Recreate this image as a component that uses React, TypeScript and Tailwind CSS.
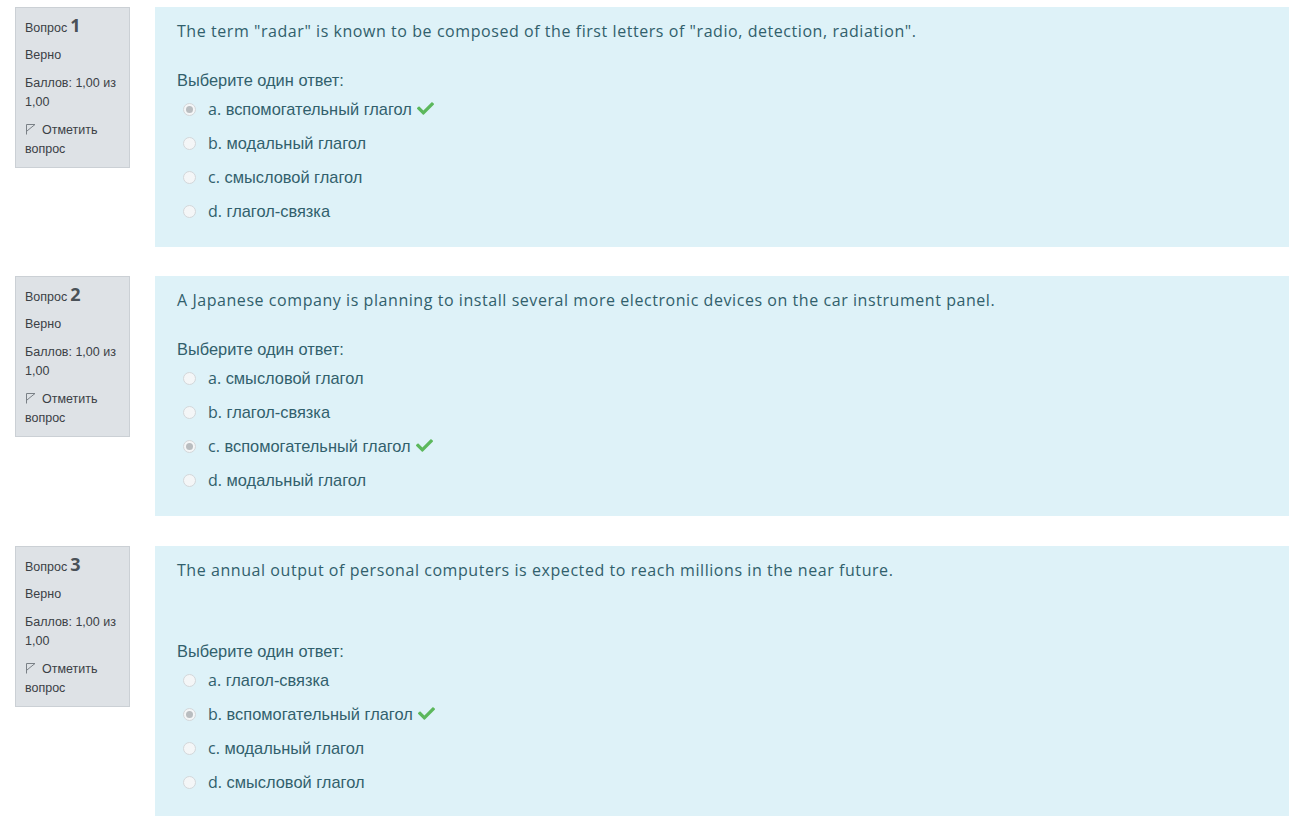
import React from "react";

type Opt = { letter: string; text: string; correct?: boolean };
type Q = { num: number; prompt: string; extraGap?: boolean; options: Opt[] };

const QUESTIONS: Q[] = [
  {
    num: 1,
    prompt: 'The term "radar" is known to be composed of the first letters of "radio, detection, radiation".',
    options: [
      { letter: "a", text: "вспомогательный глагол", correct: true },
      { letter: "b", text: "модальный глагол" },
      { letter: "c", text: "смысловой глагол" },
      { letter: "d", text: "глагол-связка" },
    ],
  },
  {
    num: 2,
    prompt: "A Japanese company is planning to install several more electronic devices on the car instrument panel.",
    options: [
      { letter: "a", text: "смысловой глагол" },
      { letter: "b", text: "глагол-связка" },
      { letter: "c", text: "вспомогательный глагол", correct: true },
      { letter: "d", text: "модальный глагол" },
    ],
  },
  {
    num: 3,
    prompt: "The annual output of personal computers is expected to reach millions in the near future.",
    extraGap: true,
    options: [
      { letter: "a", text: "глагол-связка" },
      { letter: "b", text: "вспомогательный глагол", correct: true },
      { letter: "c", text: "модальный глагол" },
      { letter: "d", text: "смысловой глагол" },
    ],
  },
];

function FlagIcon() {
  return (
    <svg width="11" height="12" viewBox="0 0 11 12" fill="none" stroke="#7a8086" strokeWidth="1" strokeLinejoin="round">
      <path d="M1.5 11.5V1.5H10L5 5.5L2 8" />
    </svg>
  );
}

function CheckIcon() {
  return (
    <svg width="17" height="17" viewBox="0 0 512 512" className="inline-block ml-[5px] -mt-[3px] align-middle">
      <path
        fill="#5cb85c"
        d="M173.898 439.404l-166.4-166.4c-9.997-9.997-9.997-26.206 0-36.204l36.203-36.204c9.997-9.998 26.207-9.998 36.204 0L192 312.69 432.095 72.596c9.997-9.997 26.207-9.997 36.204 0l36.203 36.204c9.997 9.997 9.997 26.206 0 36.204l-294.4 294.401c-9.998 9.997-26.207 9.997-36.204-.001z"
      />
    </svg>
  );
}

function Radio({ checked }: { checked?: boolean }) {
  return (
    <span className="w-[13px] h-[13px] rounded-full border border-[#d3d7da] bg-[#f4f6f7] flex items-center justify-center shrink-0">
      {checked && <span className="w-[7px] h-[7px] rounded-full bg-[#b9bdc0]" />}
    </span>
  );
}

function Info({ num }: { num: number }) {
  return (
    <div className="w-[115px] h-[161px] shrink-0 bg-[#dee2e6] border border-[#cbd0d5] px-[9px] pt-[8px] text-[12.5px] leading-[19px] text-[#3b4045] font-['Liberation_Sans',Arial,sans-serif]">
      <div className="flex items-baseline">
        <span>Вопрос</span>
        <span className="ml-[3px] text-[18px] font-bold text-[#4a5157] font-['Open_Sans',sans-serif] leading-[19px]">{num}</span>
      </div>
      <div className="mt-[8px]">Верно</div>
      <div className="mt-[9px]">Баллов: 1,00 из 1,00</div>
      <div className="mt-[9px]">
        <span className="inline-block mr-[6px] align-[-1px]">
          <FlagIcon />
        </span>
        Отметить вопрос
      </div>
    </div>
  );
}

function Question({ q }: { q: Q }) {
  return (
    <div className={`flex gap-[25px] items-start ${q.num === 3 ? "mt-px" : ""}`}>
      <Info num={q.num} />
      <div className={`flex-1 bg-[#def2f8] pl-[22px] pt-[13px] ${q.extraGap ? "pb-[17px]" : "pb-[19px]"} text-[#31606c]`}>
        <div className="text-[16px] leading-[22px] font-['Open_Sans',sans-serif] tracking-[0.56px]">{q.prompt}</div>
        <div
          className={`${q.extraGap ? "mt-[59px]" : "mt-[27px]"} text-[16.4px] leading-[22px] font-['Liberation_Sans',Arial,sans-serif]`}
        >
          Выберите один ответ:
        </div>
        <div className="mt-[1px] flex flex-col">
          {q.options.map((o) => (
            <div key={o.letter} className="h-[34px] flex items-center pl-[6px]">
              <Radio checked={o.correct} />
              <span className="ml-[12px] text-[16.4px] font-['Liberation_Sans',Arial,sans-serif]">
                <span className="font-['Open_Sans',sans-serif] text-[16px]">{o.letter}.</span> {o.text}
                {o.correct && <CheckIcon />}
              </span>
            </div>
          ))}
        </div>
      </div>
    </div>
  );
}

export default function App() {
  return (
    <div className="w-[1301px] h-[823px] bg-white pl-[15px] pr-[12px] pt-[7px] flex flex-col gap-[29px] overflow-hidden">
      {QUESTIONS.map((q) => (
        <Question key={q.num} q={q} />
      ))}
    </div>
  );
}
